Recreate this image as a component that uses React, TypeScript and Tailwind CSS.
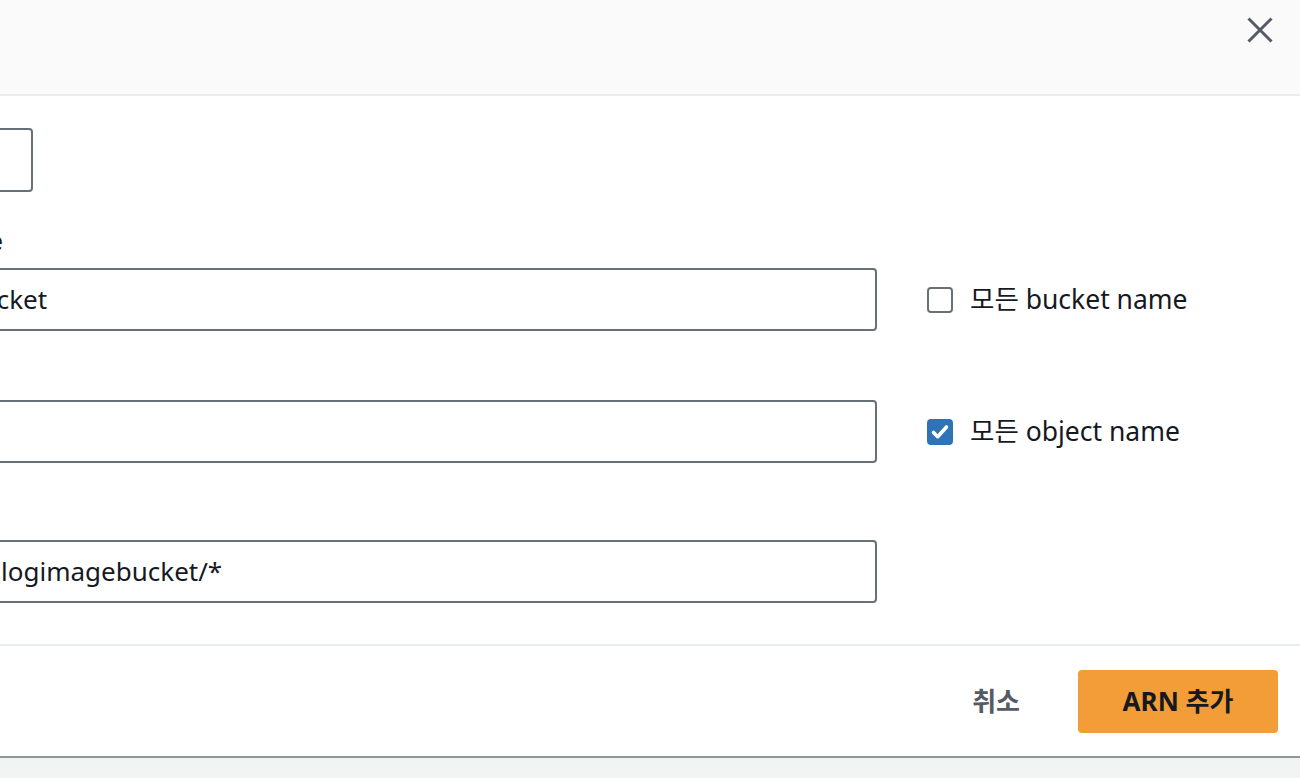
import { useState } from 'react'

const FONT = { fontFamily: '"Noto Sans", "Noto Sans CJK KR", sans-serif' }

function Checkbox({ checked, label }: { checked: boolean; label: string }) {
  return (
    <label className="flex items-center gap-[17px] text-[26.5px] text-[#16191f]">
      {checked ? (
        <span className="flex h-[26px] w-[26px] items-center justify-center rounded-[4px] bg-[#2e73b8]">
          <svg width="20" height="20" viewBox="0 0 20 20" fill="none">
            <path d="M3.5 10.5l4.2 4.2L16.5 5" stroke="white" strokeWidth="3.6" strokeLinecap="round" strokeLinejoin="round" />
          </svg>
        </span>
      ) : (
        <span className="h-[26px] w-[26px] rounded-[4px] border-2 border-[#687078] bg-white" />
      )}
      <span className="leading-none">{label}</span>
    </label>
  )
}

// labels sit right-aligned in a fixed box so only their tail pokes into view
function Field({ label, value, top, labelBox }: { label: string; value: string; top: string; labelBox: string }) {
  return (
    <div className={top}>
      <div className={`mb-[10px] h-[36px] whitespace-nowrap text-right text-[26px] font-semibold leading-[36px] text-[#16191f] ${labelBox}`}>
        {label}
      </div>
      <div className="flex h-[63px] w-[1067px] items-center rounded-[4px] border-2 border-[#687078] pl-[22px] text-[26px] text-[#16191f]">
        {value}
      </div>
    </div>
  )
}

export default function App() {
  const [anyBucket] = useState(false)
  const [anyObject] = useState(true)

  return (
    <div className="h-[778px] w-full overflow-hidden bg-[#f2f3f3]" style={FONT}>
      <div className="flex h-[758px] flex-col border-b-2 border-[#8d9899] bg-white">
        <header className="flex h-[96px] shrink-0 justify-end border-b-2 border-[#eaeded] bg-[#fafafa] pr-[27px] pt-[17px]">
          <button aria-label="닫기" className="h-[26px] w-[26px] text-[#545b64]">
            <svg width="26" height="26" viewBox="0 0 26 26" fill="none">
              <path d="M1.5 1.5l23 23M24.5 1.5l-23 23" stroke="currentColor" strokeWidth="3" />
            </svg>
          </button>
        </header>

        <div className="-ml-[190px] flex-1">
          <div className="mt-[32px] h-[64px] w-[223px] rounded-[4px] border-2 border-[#687078]" />

          <div className="flex items-end gap-[50px]">
            <Field top="mt-[30px]" labelBox="w-[193px]" label="Bucket name" value="blogimagebucket" />
            <div className="flex h-[63px] items-center">
              <Checkbox checked={anyBucket} label="모든 bucket name" />
            </div>
          </div>

          <div className="flex items-end gap-[50px]">
            <Field top="mt-[23px]" labelBox="w-[180px]" label="Object name" value="" />
            <div className="flex h-[63px] items-center">
              <Checkbox checked={anyObject} label="모든 object name" />
            </div>
          </div>

          <Field top="mt-[31px]" labelBox="w-[180px]" label="Resource ARN" value="arn:aws:s3:::blogimagebucket/*" />
        </div>

        <footer className="flex h-[112px] shrink-0 items-center justify-end gap-[58px] border-t-2 border-[#eaeded] pr-[22px]">
          <button className="text-[26px] font-bold text-[#545b64]">취소</button>
          <button className="h-[63px] w-[200px] rounded-[4px] bg-[#f29d38] text-[26px] font-bold text-[#16191f]">
            ARN 추가
          </button>
        </footer>
      </div>
    </div>
  )
}
